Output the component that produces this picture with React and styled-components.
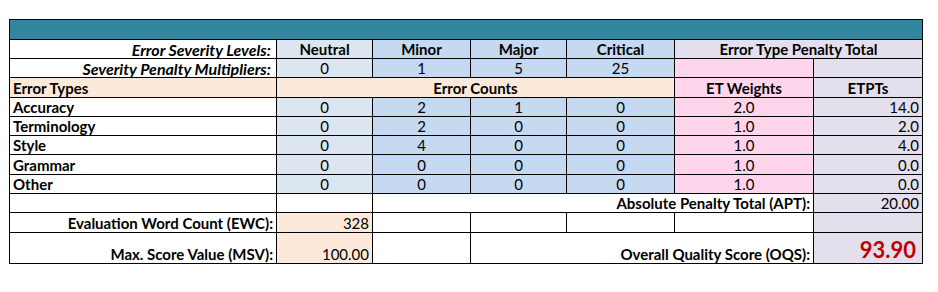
import React from 'react';
import styled, { createGlobalStyle } from 'styled-components';

const Global = createGlobalStyle`
  html, body { margin: 0; padding: 0; background: #ffffff; }
  body { font-family: Lato, "Liberation Sans", sans-serif; }
`;

const COLORS = {
  white: '#ffffff',
  teal: '#31859c',
  light: '#dce6f1',
  blue: '#c5d9f1',
  peach: '#fde9d9',
  pink: '#ffd5eb',
  lav: '#e4dfec',
};

const Page = styled.div`
  padding: 19px 0 0 9px;
`;

const Sheet = styled.div`
  display: inline-grid;
  grid-template-columns: 266px 95px 97px 95px 107px 138px 108px;
  grid-template-rows: 19px 18px 18px 19px 18px 18px 18px 19px 18px 18px 19px 30px;
  gap: 1px;
  padding: 1px;
  background: #000;
`;

const Cell = styled.div`
  grid-column: span ${(p) => p.$span || 1};
  background: ${(p) => COLORS[p.$bg || 'white']};
  display: flex;
  align-items: flex-end;
  justify-content: ${(p) =>
    p.$align === 'left' ? 'flex-start' : p.$align === 'right' ? 'flex-end' : 'center'};
  padding: ${(p) => (p.$italic ? '0 5px 0 3px' : '0 3px')};
  font-size: ${(p) => (p.$italic ? '16px' : '15px')};
  line-height: 17px;
  font-weight: ${(p) => (p.$bold ? 700 : 400)};
  font-style: ${(p) => (p.$italic ? 'italic' : 'normal')};
  color: #000;
  white-space: nowrap;
  overflow: hidden;
`;

const Score = styled.span`
  color: #c00000;
  font-size: 22px;
  line-height: 26px;
  font-weight: 700;
  padding-right: 3px;
`;

const levels = [
  { name: 'Neutral', mult: '0', bg: 'light' },
  { name: 'Minor', mult: '1', bg: 'blue' },
  { name: 'Major', mult: '5', bg: 'blue' },
  { name: 'Critical', mult: '25', bg: 'blue' },
];

const errorRows = [
  { type: 'Accuracy', counts: [0, 2, 1, 0], weight: '2.0', total: '14.0' },
  { type: 'Terminology', counts: [0, 2, 0, 0], weight: '1.0', total: '2.0' },
  { type: 'Style', counts: [0, 4, 0, 0], weight: '1.0', total: '4.0' },
  { type: 'Grammar', counts: [0, 0, 0, 0], weight: '1.0', total: '0.0' },
  { type: 'Other', counts: [0, 0, 0, 0], weight: '1.0', total: '0.0' },
];

export default function App() {
  return (
    <>
      <Global />
      <Page>
        <Sheet>
          <Cell $span={7} $bg="teal" />

          <Cell $align="right" $bold $italic>Error Severity Levels:</Cell>
          {levels.map((l) => (
            <Cell key={l.name} $bg={l.bg} $bold>{l.name}</Cell>
          ))}
          <Cell $span={2} $bg="lav" $bold>Error Type Penalty Total</Cell>

          <Cell $align="right" $bold $italic>Severity Penalty Multipliers:</Cell>
          {levels.map((l) => (
            <Cell key={l.name} $bg={l.bg}>{l.mult}</Cell>
          ))}
          <Cell $bg="pink" />
          <Cell $bg="lav" />

          <Cell $align="left" $bg="peach" $bold>Error Types</Cell>
          <Cell $span={4} $bg="peach" $bold>Error Counts</Cell>
          <Cell $bg="pink" $bold>ET Weights</Cell>
          <Cell $bg="lav" $bold>ETPTs</Cell>

          {errorRows.map((r) => (
            <React.Fragment key={r.type}>
              <Cell $align="left" $bold>{r.type}</Cell>
              {r.counts.map((c, i) => (
                <Cell key={i} $bg={levels[i].bg}>{c}</Cell>
              ))}
              <Cell $bg="pink">{r.weight}</Cell>
              <Cell $bg="lav" $align="right">{r.total}</Cell>
            </React.Fragment>
          ))}

          <Cell />
          <Cell />
          <Cell $span={4} $align="right" $bold>Absolute Penalty Total (APT):</Cell>
          <Cell $bg="lav" $align="right">20.00</Cell>

          <Cell $align="right" $bold>Evaluation Word Count (EWC):</Cell>
          <Cell $bg="peach" $align="right">328</Cell>
          <Cell />
          <Cell />
          <Cell />
          <Cell />
          <Cell $bg="lav" />

          <Cell $align="right" $bold>Max. Score Value (MSV):</Cell>
          <Cell $bg="peach" $align="right">100.00</Cell>
          <Cell />
          <Cell $span={3} $align="right" $bold>Overall Quality Score (OQS):</Cell>
          <Cell $bg="lav" $align="right">
            <Score>93.90</Score>
          </Cell>
        </Sheet>
      </Page>
    </>
  );
}
